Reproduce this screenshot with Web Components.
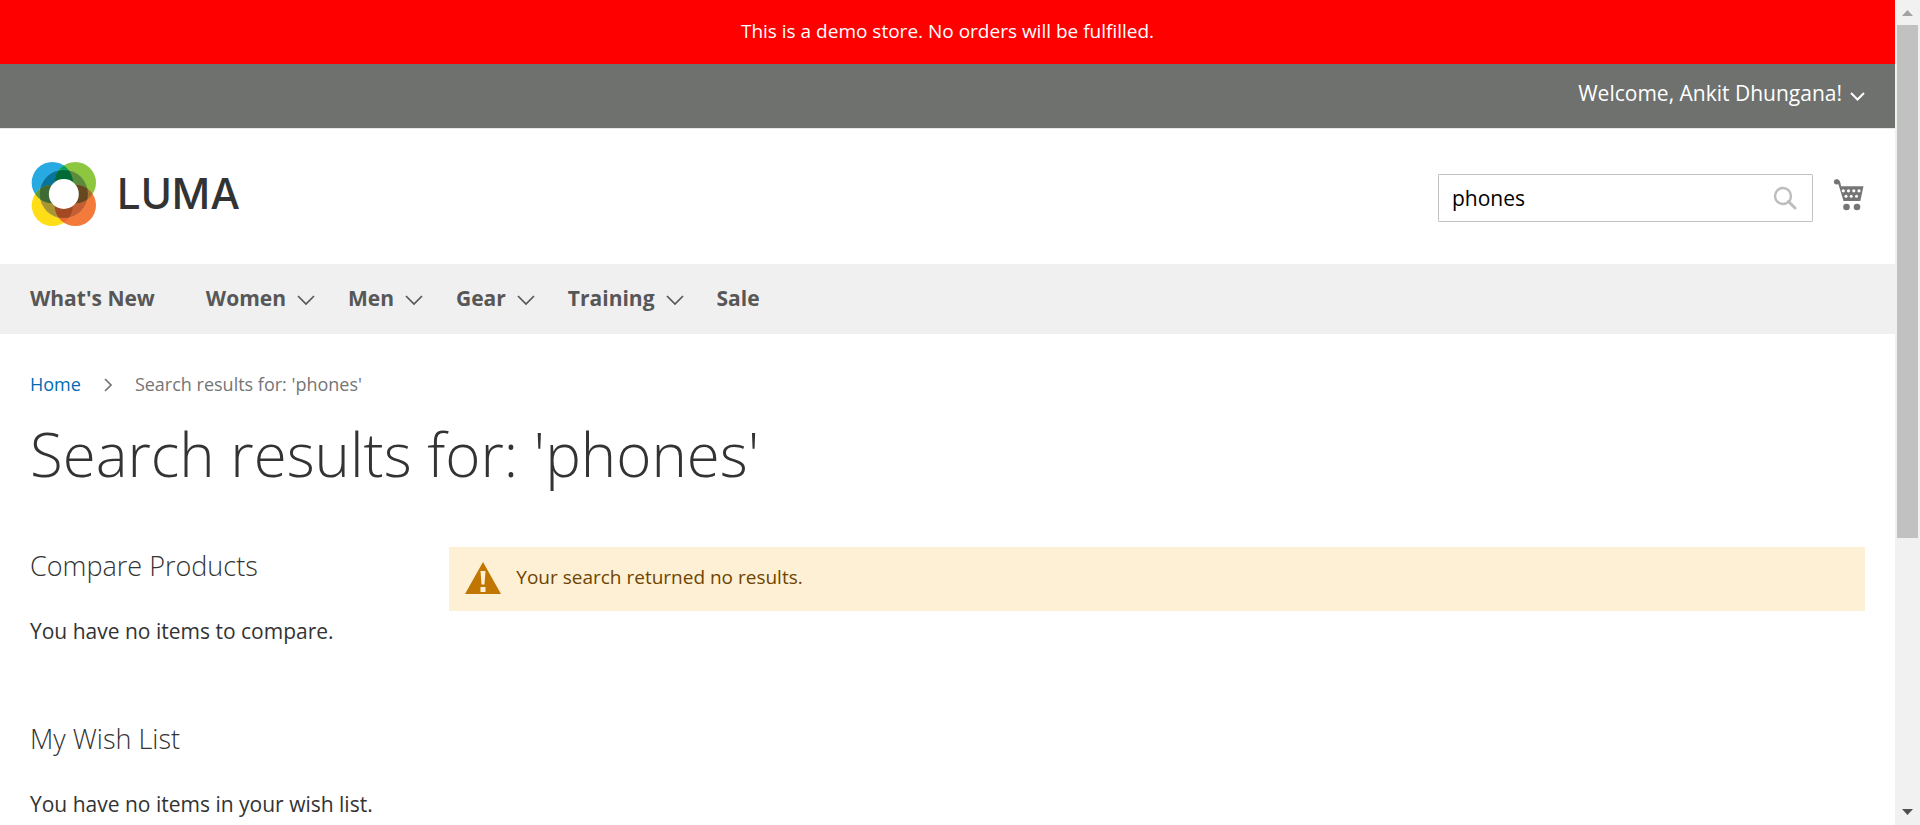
<!DOCTYPE html>
<html lang="en">
<head>
<meta charset="utf-8">
<title>Search results for: 'phones'</title>
<style>
body { margin: 0; font-family: "Open Sans", "Noto Sans", sans-serif; font-size: 21px; line-height: 30px; color: #333; background: #fff; }
</style>
</head>
<body>
<store-page>
  <demo-notice slot="top">This is a demo store. No orders will be fulfilled.</demo-notice>
  <account-panel slot="top">Welcome, Ankit Dhungana!</account-panel>
  <store-header slot="top"></store-header>
  <store-nav slot="top"></store-nav>
  <bread-crumbs slot="top">Search results for: 'phones'</bread-crumbs>
  <page-title slot="top">Search results for: 'phones'</page-title>
  <side-block slot="side" heading="Compare Products">You have no items to compare.</side-block>
  <side-block slot="side" heading="My Wish List">You have no items in your wish list.</side-block>
  <notice-message slot="main">Your search returned no results.</notice-message>
</store-page>

<script>
function define(name, html, setup) {
  const template = document.createElement('template');
  template.innerHTML = html;
  customElements.define(name, class extends HTMLElement {
    connectedCallback() {
      if (this.shadowRoot) return;
      this.attachShadow({ mode: 'open' }).append(template.content.cloneNode(true));
      if (setup) setup(this);
    }
  });
}

define('store-page', `
<style>
:host { display: grid; grid-template-columns: minmax(0, 1fr) auto; height: 100vh; overflow: hidden; }
.page { overflow: hidden; }
.columns { display: grid; grid-template-columns: 11fr 40fr; column-gap: 30px; padding: 0 30px; margin-top: 60px; }
aside { display: grid; gap: 78px; padding-top: 4px; }
</style>
<div class="page">
  <slot name="top"></slot>
  <div class="columns">
    <aside><slot name="side"></slot></aside>
    <main><slot name="main"></slot></main>
  </div>
</div>
<scroll-rail></scroll-rail>`);

define('scroll-rail', `
<style>
:host { display: grid; grid-template-rows: 25px 1fr 25px; width: 25px; background: #f1f1f1; }
svg { display: block; }
.track { padding: 0 2px; }
.thumb { height: 66.2%; background: #c1c1c1; }
</style>
<svg width="25" height="25"><path d="M7 16h11l-5.500-6z" fill="#a3a3a3"/></svg>
<div class="track"><div class="thumb"></div></div>
<svg width="25" height="25"><path d="M7 9h11l-5.500 6z" fill="#505050"/></svg>`);

define('demo-notice', `
<style>
:host { display: block; background: #f00; color: #fff; font-size: 19px; line-height: 28px; padding: 17px 30px 19px; text-align: center; }
</style>
<slot></slot>`);

define('account-panel', `
<style>
:host { display: flex; justify-content: flex-end; background: #6e716e; padding: 14px 30px 20px; border-bottom: 1px solid #e8e8e8; }
button { all: unset; display: flex; align-items: center; gap: 8px; color: #fff; cursor: pointer; }
svg { margin-top: 6px; }
</style>
<button type="button"><span><slot></slot></span><svg width="15" height="9" viewBox="0 0 15 9" fill="none" stroke="#fff" stroke-width="2"><path d="M1 1l6.500 6.500L14 1"/></svg></button>`);

define('store-header', `
<style>
:host { display: flex; align-items: flex-start; justify-content: space-between; padding: 32px 30px 37px; }
.logo { display: flex; align-items: center; gap: 20px; color: #333; text-decoration: none; }
.logo span { font: 500 42px/64px Inter, sans-serif; }
.logo svg { display: block; }
.tools { display: flex; align-items: flex-start; gap: 20px; padding-top: 13px; }
form { display: flex; align-items: center; box-sizing: border-box; width: 375px; height: 48px; border: 1px solid #c2c2c2; border-radius: 1px; padding-right: 15px; }
input { flex: 1; min-width: 0; border: 0; outline: 0; background: none; padding: 0 0 0 13px; font: inherit; color: #000; }
button { all: unset; cursor: pointer; }
form svg, .cart svg { display: block; }
.cart { margin-top: 5px; }
</style>
<a class="logo" href="#" aria-label="LUMA store">
  <svg width="67" height="66" viewBox="89 63 201 198">
    <defs>
      <clipPath id="b"><circle cx="156" cy="128" r="62"/></clipPath>
      <clipPath id="g"><circle cx="225" cy="128" r="62"/></clipPath>
      <clipPath id="y"><circle cx="156" cy="196" r="62"/></clipPath>
      <clipPath id="o"><circle cx="225" cy="196" r="62"/></clipPath>
    </defs>
    <circle cx="156" cy="128" r="62" fill="#27a9e1"/>
    <circle cx="225" cy="128" r="62" fill="#8dc63f"/>
    <circle cx="156" cy="196" r="62" fill="#ffde17"/>
    <circle cx="225" cy="196" r="62" fill="#f37a3b"/>
    <g clip-path="url(#b)"><circle cx="225" cy="128" r="62" fill="#00a35a"/><circle cx="156" cy="196" r="62" fill="#5a9a3c"/></g>
    <g clip-path="url(#o)"><circle cx="225" cy="128" r="62" fill="#a8702c"/><circle cx="156" cy="196" r="62" fill="#ee6a2a"/></g>
    <g clip-path="url(#b)"><circle cx="190.500" cy="162" r="73" fill="#08739b"/></g>
    <g clip-path="url(#g)"><circle cx="190.500" cy="162" r="73" fill="#5c8b3b"/></g>
    <g clip-path="url(#y)"><circle cx="190.500" cy="162" r="73" fill="#a89635"/></g>
    <g clip-path="url(#o)"><circle cx="190.500" cy="162" r="73" fill="#c35f32"/></g>
    <g clip-path="url(#b)"><g clip-path="url(#g)"><circle cx="190.500" cy="162" r="73" fill="#006b37"/></g><g clip-path="url(#y)"><circle cx="190.500" cy="162" r="73" fill="#3e6b34"/></g></g>
    <g clip-path="url(#o)"><g clip-path="url(#g)"><circle cx="190.500" cy="162" r="73" fill="#654820"/></g><g clip-path="url(#y)"><circle cx="190.500" cy="162" r="73" fill="#a34a25"/></g></g>
    <circle cx="190.500" cy="162" r="73" fill="none" stroke="#fff" stroke-opacity=".3" stroke-width="1"/>
    <circle cx="190.500" cy="162" r="45" fill="#fff"/>
  </svg>
  <span>LUMA</span>
</a>
<div class="tools">
  <form role="search" onsubmit="return false">
    <input type="text" aria-label="Search" value="phones">
    <button type="submit" aria-label="Search"><svg width="24" height="24" viewBox="0 0 24 24" fill="none" stroke="#bdbdbd"><circle cx="10" cy="10" r="8" stroke-width="2.400"/><path d="M15.500 15.500L22 22" stroke-width="3" stroke-linecap="round"/></svg></button>
  </form>
  <a class="cart" href="#" aria-label="My Cart"><svg width="32" height="32" viewBox="0 0 32 32"><g fill="#757575"><circle cx="3.500" cy="2.800" r="2.600"/><path d="M3.500 .2c2.300 0 3.500 1.500 4 4l.6 3H30.500L27.300 22H10.500L5.500 5.500 3 4.500z"/><circle cx="13.500" cy="28" r="3.300"/><circle cx="24" cy="28" r="3.300"/></g><g fill="#fff"><circle cx="10.300" cy="11.800" r="1.600"/><circle cx="15.500" cy="11.800" r="1.600"/><circle cx="20.800" cy="11.800" r="1.600"/><circle cx="26" cy="11.800" r="1.600"/><circle cx="13" cy="17.200" r="1.500"/><circle cx="18.200" cy="17.200" r="1.500"/><circle cx="23.500" cy="17.200" r="1.500"/></g></svg></a>
</div>`);

define('store-nav', `
<style>
:host { display: block; background: #f0f0f0; padding: 19px 30px 21px; }
nav { display: flex; gap: 33px; }
a { display: flex; align-items: center; gap: 11px; color: #575757; font-weight: 700; text-decoration: none; }
.plain { margin-right: 18px; }
svg { margin-top: 5px; }
</style>
<nav></nav>`, host => {
  const arrow = '<svg width="18" height="11" viewBox="0 0 18 11" fill="none" stroke="#575757" stroke-width="1.700"><path d="M1 1l8 8 8-8"/></svg>';
  const items = [["What's New", false], ['Women', true], ['Men', true], ['Gear', true], ['Training', true], ['Sale', false]];
  host.shadowRoot.querySelector('nav').innerHTML = items.map(([label, menu]) =>
    `<a href="#" class="${menu ? '' : 'plain'}">${label}${menu ? arrow : ''}</a>`).join('');
});

define('bread-crumbs', `
<style>
:host { display: block; padding: 36px 30px 0; font-size: 18px; line-height: 28px; color: #757575; }
nav { display: flex; align-items: center; gap: 23px; }
a { color: #006bb4; text-decoration: none; }
svg { margin-top: 2px; }
</style>
<nav aria-label="Breadcrumb"><a href="#">Home</a><svg width="8" height="14" viewBox="0 0 8 14" fill="none" stroke="#757575" stroke-width="1.700"><path d="M1 1l6 6-6 6"/></svg><span><slot></slot></span></nav>`);

define('page-title', `
<style>
:host { display: block; padding: 23px 30px 0; }
h1 { margin: 0; font-size: 60px; line-height: 66px; font-weight: 300; }
</style>
<h1><slot></slot></h1>`);

define('side-block', `
<style>
:host { display: block; }
h2 { margin: 0 0 35px; font-size: 27px; line-height: 30px; font-weight: 300; }
p { margin: 0; line-height: 30px; }
</style>
<h2></h2><p><slot></slot></p>`, host => {
  host.shadowRoot.querySelector('h2').textContent = host.getAttribute('heading');
});

define('notice-message', `
<style>
:host { display: flex; align-items: center; gap: 15px; padding: 16px 30px 20px 16px; background: #fdf0d5; color: #6f4400; font-size: 19px; line-height: 28px; }
svg { margin: -3px 0 -5px; }
</style>
<svg width="36" height="32" viewBox="0 0 36 32"><path d="M18 0l18 32H0z" fill="#c07600"/><path d="M15.500 9h5l-1 13.500h-3zM15.500 25h5v5h-5z" fill="#fdf0d5"/></svg><span><slot></slot></span>`);
</script>
</body>
</html>
